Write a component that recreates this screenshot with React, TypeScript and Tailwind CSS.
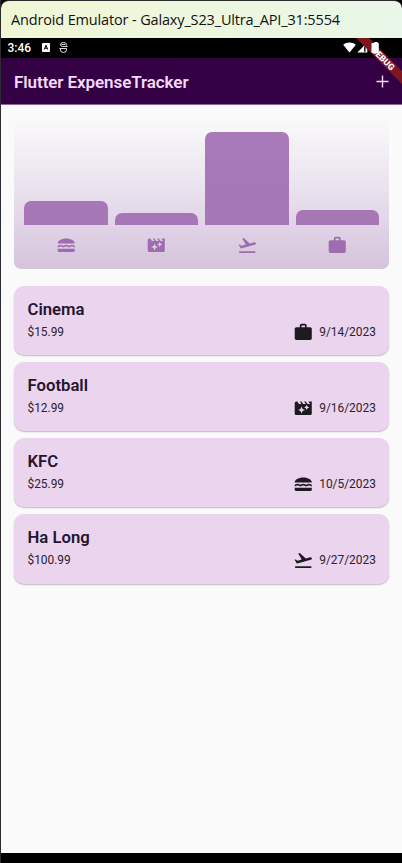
import type { IconType } from 'react-icons';
import { MdLunchDining, MdMovieFilter, MdFlightTakeoff, MdWork } from 'react-icons/md';

const bars: { Icon: IconType; height: number }[] = [
  { Icon: MdLunchDining, height: 24 },
  { Icon: MdMovieFilter, height: 12.3 },
  { Icon: MdFlightTakeoff, height: 93.7 },
  { Icon: MdWork, height: 15 },
];

const expenses: { title: string; amount: string; date: string; Icon: IconType }[] = [
  { title: 'Cinema', amount: '$15.99', date: '9/14/2023', Icon: MdWork },
  { title: 'Football', amount: '$12.99', date: '9/16/2023', Icon: MdMovieFilter },
  { title: 'KFC', amount: '$25.99', date: '10/5/2023', Icon: MdLunchDining },
  { title: 'Ha Long', amount: '$100.99', date: '9/27/2023', Icon: MdFlightTakeoff },
];

function WindowTitle() {
  return (
    <div className="h-[38px] shrink-0 bg-black">
      <div className="flex h-full items-center rounded-t-lg border-t border-[#2b2b2b] bg-linear-to-r from-[#f1f7d5] to-[#e9f7e9] pl-[10px] font-['Open_Sans',sans-serif] text-[14.5px] tracking-[-0.15px] whitespace-nowrap text-[#111]">
        Android Emulator - Galaxy_S23_Ultra_API_31:5554
      </div>
    </div>
  );
}

function StatusBar() {
  return (
    <div className="flex h-[19.5px] shrink-0 items-center bg-black pl-[6.5px] text-white">
      <span className="w-[34px] text-[12px] font-medium">3:46</span>
      <svg className="h-[9px] w-2" viewBox="0 0 8 9">
        <rect width="8" height="9" rx="1" fill="#fff" />
        <path d="M2.2 6.6 4 2.2 5.8 6.6M2.8 5.2h2.4" fill="none" stroke="#000" />
      </svg>
      <svg className="ml-[9.5px] h-[11px] w-[9px]" viewBox="0 0 9 11" fill="none" stroke="#ddd">
        <path d="M7.500 3.500V2.500Q7.500.5 4.500.5T1.500 2.500t2 2H8.500M2.500 2.500h4M1.500 6.500V8q0 2.500 3 2.500t3-2.500V6.500H.5" />
      </svg>
      <svg className="ml-auto h-[11px] w-[13px]" viewBox="0 0 13 11" fill="#fff">
        <path d="M.2 2.8C3.8-.3 9.2-.3 12.8 2.8L6.5 10.5Z" />
      </svg>
      <svg className="ml-px h-[11px] w-[11px]" viewBox="0 0 11 11">
        <path d="M.3 10.5 10.3.5v10Z" fill="#fff" />
        <path d="M7 4.8h1.6v5H7Z" fill="#222" />
      </svg>
      <span className="w-[34.500px]" />
    </div>
  );
}

function DebugBanner() {
  return (
    <svg className="pointer-events-none absolute top-[38px] right-0 h-[48px] w-[48px]" viewBox="0 0 48 48">
      <path d="M2 0H15L48 33V46Z" fill="#801522" />
      <path d="M18.500 5h1.700V4h3.500v1H24q.8 0 .8.8V14q0 1-.8 1h-5.500q-1 0-1-1V5.800q0-.8 1-.8Z" fill="#fff" />
      <text
        x="29"
        y="23.9"
        transform="rotate(45 29 21)"
        textAnchor="middle"
        fill="#fff"
        className="font-['Roboto',sans-serif] text-[8.800px] font-black"
      >
        DEBUG
      </text>
    </svg>
  );
}

function AppBar() {
  return (
    <header className="flex h-[47px] shrink-0 items-center justify-between border-b border-[#8a6798] bg-[#330044] pr-[13px] pl-[13px] text-[#f5d9ff]">
      <h1 className="mt-[4px] text-[17px] font-semibold tracking-[-0.08px]">Flutter ExpenseTracker</h1>
      <svg className="mt-px h-[13px] w-[13px]" viewBox="0 0 13 13" stroke="currentColor" strokeWidth="1.4">
        <path d="M6.500 .5v12M.5 6.500h12" />
      </svg>
    </header>
  );
}

function Chart() {
  return (
    <section className="mt-[13.5px] flex h-[150.500px] shrink-0 flex-col rounded-[7px] bg-linear-to-t from-[#d5c3dc] via-[#e9e0ee] via-50% to-[#fafafa] px-[10px]">
      <div className="flex h-[107.300px] items-end gap-[6.800px]">
        {bars.map((bar, i) => (
          <div key={i} className="flex-1 rounded-t-[7px] bg-[#9b65ae]/85" style={{ height: bar.height }} />
        ))}
      </div>
      <div className="mt-[10px] flex gap-[6.800px]">
        {bars.map(({ Icon }, i) => (
          <div key={i} className="flex flex-1 justify-center">
            <Icon className="size-[20.500px] text-[#a06cb0]" />
          </div>
        ))}
      </div>
    </section>
  );
}

export default function App() {
  return (
    <div className="relative flex h-[863px] w-[402px] flex-col overflow-hidden border-l border-[#2d2c30] bg-[#fafafa] font-['Roboto',sans-serif]">
      <WindowTitle />
      <StatusBar />
      <AppBar />
      <main className="flex flex-1 flex-col pr-[12.700px] pl-[13px]">
        <Chart />
        <ul className="mt-[17px] flex flex-col gap-[6.600px]">
          {expenses.map(({ title, amount, date, Icon }) => (
            <li
              key={title}
              className="h-[69.600px] rounded-[10px] bg-[#ebd4ed] px-[13.500px] pt-[14px] shadow-[0_1px_1.5px_rgba(0,0,0,0.25)]"
            >
              <h2 className="text-[16.700px] leading-[20px] font-semibold text-[#241530]">{title}</h2>
              <div className="mt-[2.200px] flex h-[20.500px] items-center text-[11.900px] text-[#2b222f]">
                <span className="mt-px">{amount}</span>
                <Icon className="mr-[6.200px] ml-auto size-[20.500px] text-[#1d1b20]" />
                <span className="mt-px">{date}</span>
              </div>
            </li>
          ))}
        </ul>
      </main>
      <div className="h-[10px] shrink-0 bg-black" />
      <DebugBanner />
    </div>
  );
}
